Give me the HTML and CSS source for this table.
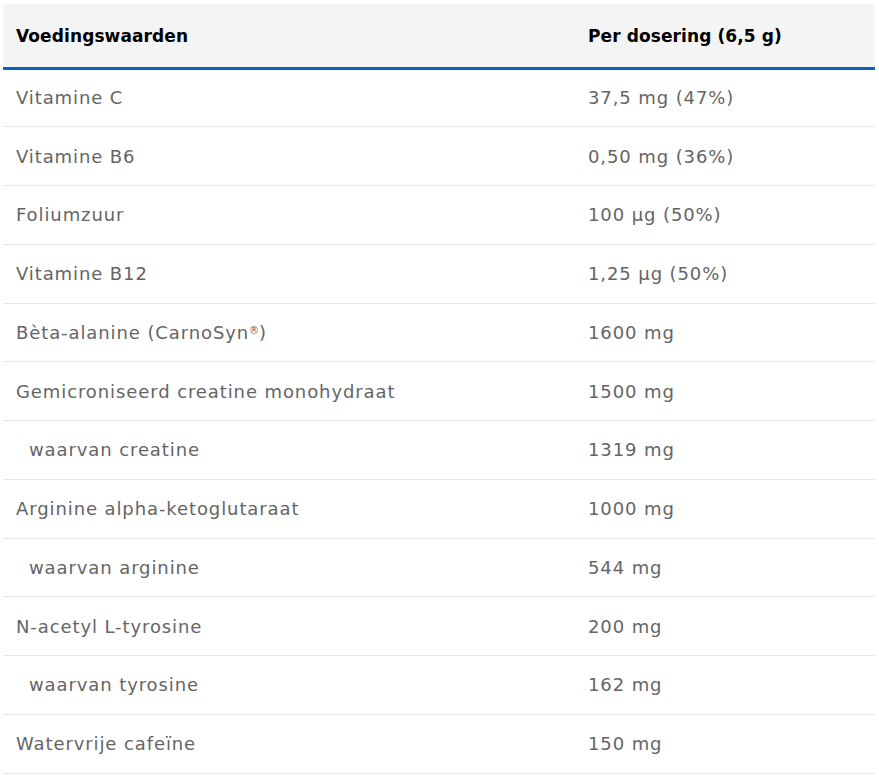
FILE: index.html
```html
<!DOCTYPE html>
<html lang="nl">
<head>
<meta charset="utf-8">
<link rel="stylesheet" href="styles.css">
</head>
<body>
<table class="nutri">
  <thead>
    <tr><th class="c1">Voedingswaarden</th><th class="c2">Per dosering (6,5 g)</th></tr>
  </thead>
  <tbody>
    <tr><td>Vitamine C</td><td>37,5 mg (47%)</td></tr>
    <tr><td>Vitamine B6</td><td>0,50 mg (36%)</td></tr>
    <tr><td>Foliumzuur</td><td>100 µg (50%)</td></tr>
    <tr><td>Vitamine B12</td><td>1,25 µg (50%)</td></tr>
    <tr><td>Bèta-alanine (CarnoSyn<sup class="reg">®</sup>)</td><td>1600 mg</td></tr>
    <tr><td>Gemicroniseerd creatine monohydraat</td><td>1500 mg</td></tr>
    <tr><td class="sub">waarvan creatine</td><td>1319 mg</td></tr>
    <tr><td>Arginine alpha-ketoglutaraat</td><td>1000 mg</td></tr>
    <tr><td class="sub">waarvan arginine</td><td>544 mg</td></tr>
    <tr><td>N-acetyl L-tyrosine</td><td>200 mg</td></tr>
    <tr><td class="sub">waarvan tyrosine</td><td>162 mg</td></tr>
    <tr><td>Watervrije cafeïne</td><td>150 mg</td></tr>
  </tbody>
</table>
</body>
</html>
```
FILE: styles.css
```css
html, body { margin: 0; padding: 0; background: #fff; }
body { padding: 4px 4px 0 3px; font-family: "DejaVu Sans", sans-serif; }
.nutri {
  width: 872px;
  border-collapse: collapse;
  table-layout: fixed;
}
.nutri th {
  background: #f4f4f4;
  color: #000;
  font-weight: 700;
  font-size: 17px;
  letter-spacing: 0.1px;
  text-align: left;
  height: 64px;
  padding: 1px 13px 0;
  border-bottom: 3px solid #0a62bf;
  box-sizing: border-box;
}
.nutri .c1 { width: 572px; }
.nutri td {
  color: #656565;
  font-size: 18px;
  letter-spacing: 0.9px;
  height: 58.75px;
  padding: 0 13px;
  border-bottom: 1px solid #e8e8e8;
  box-sizing: border-box;
}
.nutri td.sub { padding-left: 26px; }
.reg { font-size: 10px; vertical-align: 5px; line-height: 0; letter-spacing: 0; }
```
